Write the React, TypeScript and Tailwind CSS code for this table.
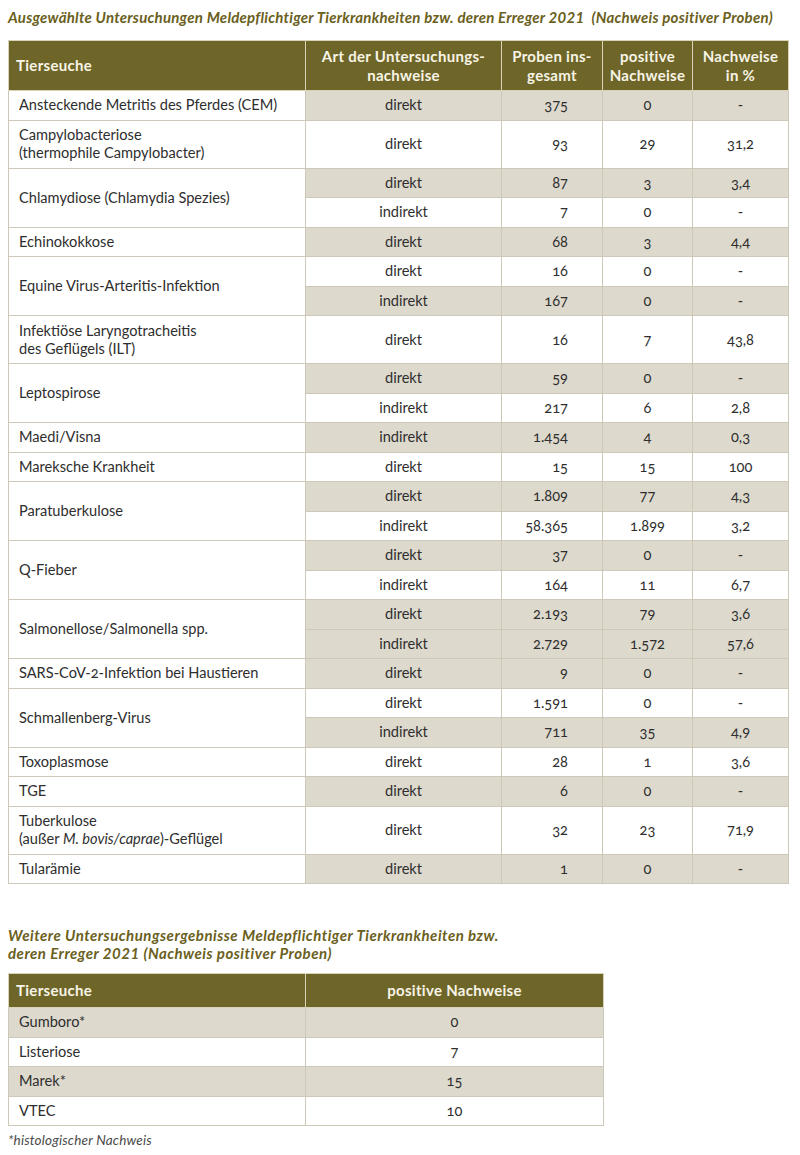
import React from "react";

type Sub = { art: string; proben: string; pos: string; pct: string; s: boolean };
type Row = { name: React.ReactNode; tall?: boolean; subs: Sub[] };

const d = (art: string, proben: string, pos: string, pct: string, s: boolean): Sub => ({ art, proben, pos, pct, s });

const rows: Row[] = [
  { name: "Ansteckende Metritis des Pferdes (CEM)", subs: [d("direkt", "375", "0", "-", true)] },
  { name: <>Campylobacteriose<br />(thermophile Campylobacter)</>, tall: true, subs: [d("direkt", "93", "29", "31,2", false)] },
  { name: "Chlamydiose (Chlamydia Spezies)", subs: [d("direkt", "87", "3", "3,4", true), d("indirekt", "7", "0", "-", false)] },
  { name: "Echinokokkose", subs: [d("direkt", "68", "3", "4,4", true)] },
  { name: "Equine Virus-Arteritis-Infektion", subs: [d("direkt", "16", "0", "-", false), d("indirekt", "167", "0", "-", true)] },
  { name: <>Infektiöse Laryngotracheitis<br />des Geflügels (ILT)</>, tall: true, subs: [d("direkt", "16", "7", "43,8", false)] },
  { name: "Leptospirose", subs: [d("direkt", "59", "0", "-", true), d("indirekt", "217", "6", "2,8", false)] },
  { name: "Maedi/Visna", subs: [d("indirekt", "1.454", "4", "0,3", true)] },
  { name: "Mareksche Krankheit", subs: [d("direkt", "15", "15", "100", false)] },
  { name: "Paratuberkulose", subs: [d("direkt", "1.809", "77", "4,3", true), d("indirekt", "58.365", "1.899", "3,2", false)] },
  { name: "Q-Fieber", subs: [d("direkt", "37", "0", "-", true), d("indirekt", "164", "11", "6,7", false)] },
  { name: "Salmonellose/Salmonella spp.", subs: [d("direkt", "2.193", "79", "3,6", true), d("indirekt", "2.729", "1.572", "57,6", true)] },
  { name: "SARS-CoV-2-Infektion bei Haustieren", subs: [d("direkt", "9", "0", "-", true)] },
  { name: "Schmallenberg-Virus", subs: [d("direkt", "1.591", "0", "-", false), d("indirekt", "711", "35", "4,9", true)] },
  { name: "Toxoplasmose", subs: [d("direkt", "28", "1", "3,6", false)] },
  { name: "TGE", subs: [d("direkt", "6", "0", "-", true)] },
  { name: <>Tuberkulose<br />(außer <i>M. bovis/caprae</i>)-Geflügel</>, tall: true, subs: [d("direkt", "32", "23", "71,9", false)] },
  { name: "Tularämie", subs: [d("direkt", "1", "0", "-", true)] },
];

const bd = "border border-[#cdc8b8]";
const th = "border border-[#d9d3b9] bg-[#6e6528] text-[#f7f4e6] font-bold text-[15px] tracking-[0.3px] leading-[19px] align-middle";

export default function App() {
  return (
    <div className="w-[800px] h-[1155px] bg-white text-[#2e2e2e] font-['Lato','Liberation_Sans',sans-serif] overflow-hidden">
      <div className="pt-[8px] pl-[8px] text-[15px] leading-[18px] font-bold italic text-[#6a6021] whitespace-nowrap tracking-[0.24px]">
        Ausgewählte Untersuchungen Meldepflichtiger Tierkrankheiten bzw. deren Erreger 2021&nbsp;&nbsp;(Nachweis positiver Proben)
      </div>
      <table className="ml-[8px] mt-[14px] w-[780px] table-fixed border-collapse text-[14.6px] leading-[18px] oldstyle-nums">
        <colgroup>
          <col className="w-[297px]" />
          <col className="w-[196px]" />
          <col className="w-[101px]" />
          <col className="w-[90px]" />
          <col className="w-[96px]" />
        </colgroup>
        <thead>
          <tr className="h-[50px]">
            <th className={`${th} text-left pl-[7px]`}>Tierseuche</th>
            <th className={`${th} text-center`}>Art der Untersuchungs-<br />nachweise</th>
            <th className={`${th} text-center`}>Proben ins-<br />gesamt</th>
            <th className={`${th} text-center`}>positive<br />Nachweise</th>
            <th className={`${th} text-center`}>Nachweise<br />in %</th>
          </tr>
        </thead>
        <tbody>
          {rows.map((r, i) =>
            r.subs.map((s, j) => {
              const bg = s.s ? "bg-[#ddd9cd]" : "bg-white";
              const h = r.tall ? "h-[48px]" : "h-[29.5px]";
              return (
                <tr key={`${i}-${j}`} className={h}>
                  {j === 0 && (
                    <td rowSpan={r.subs.length} className={`${bd} bg-white pl-[10px] align-middle`}>
                      {r.name}
                    </td>
                  )}
                  <td className={`${bd} ${bg} text-center`}>{s.art}</td>
                  <td className={`${bd} ${bg} text-right pr-[34px]`}>{s.proben}</td>
                  <td className={`${bd} ${bg} text-center`}>{s.pos}</td>
                  <td className={`${bd} ${bg} text-center`}>{s.pct}</td>
                </tr>
              );
            })
          )}
        </tbody>
      </table>

      <div className="mt-[42px] pl-[8px] text-[15px] leading-[18px] font-bold italic text-[#6a6021] tracking-[0.5px]">
        Weitere Untersuchungsergebnisse Meldepflichtiger Tierkrankheiten bzw.
        <br />
        deren Erreger 2021 (Nachweis positiver Proben)
      </div>
      <table className="ml-[8px] mt-[11px] w-[595px] table-fixed border-collapse text-[14.6px] leading-[18px] oldstyle-nums">
        <colgroup>
          <col className="w-[297px]" />
          <col className="w-[298px]" />
        </colgroup>
        <thead>
          <tr className="h-[34px]">
            <th className={`${th} text-left pl-[7px]`}>Tierseuche</th>
            <th className={`${th} text-center`}>positive Nachweise</th>
          </tr>
        </thead>
        <tbody>
          {[
            ["Gumboro*", "0", true],
            ["Listeriose", "7", false],
            ["Marek*", "15", true],
            ["VTEC", "10", false],
          ].map(([n, v, s]) => (
            <tr key={n as string} className="h-[29.5px]">
              <td className={`${bd} ${s ? "bg-[#ddd9cd]" : "bg-white"} pl-[10px]`}>{n as string}</td>
              <td className={`${bd} ${s ? "bg-[#ddd9cd]" : "bg-white"} text-center`}>{v as string}</td>
            </tr>
          ))}
        </tbody>
      </table>
      <div className="pl-[8px] pt-[5px] text-[13.5px] leading-[18px] italic text-[#4a4a4a] tracking-[0.2px]">*histologischer Nachweis</div>
    </div>
  );
}
